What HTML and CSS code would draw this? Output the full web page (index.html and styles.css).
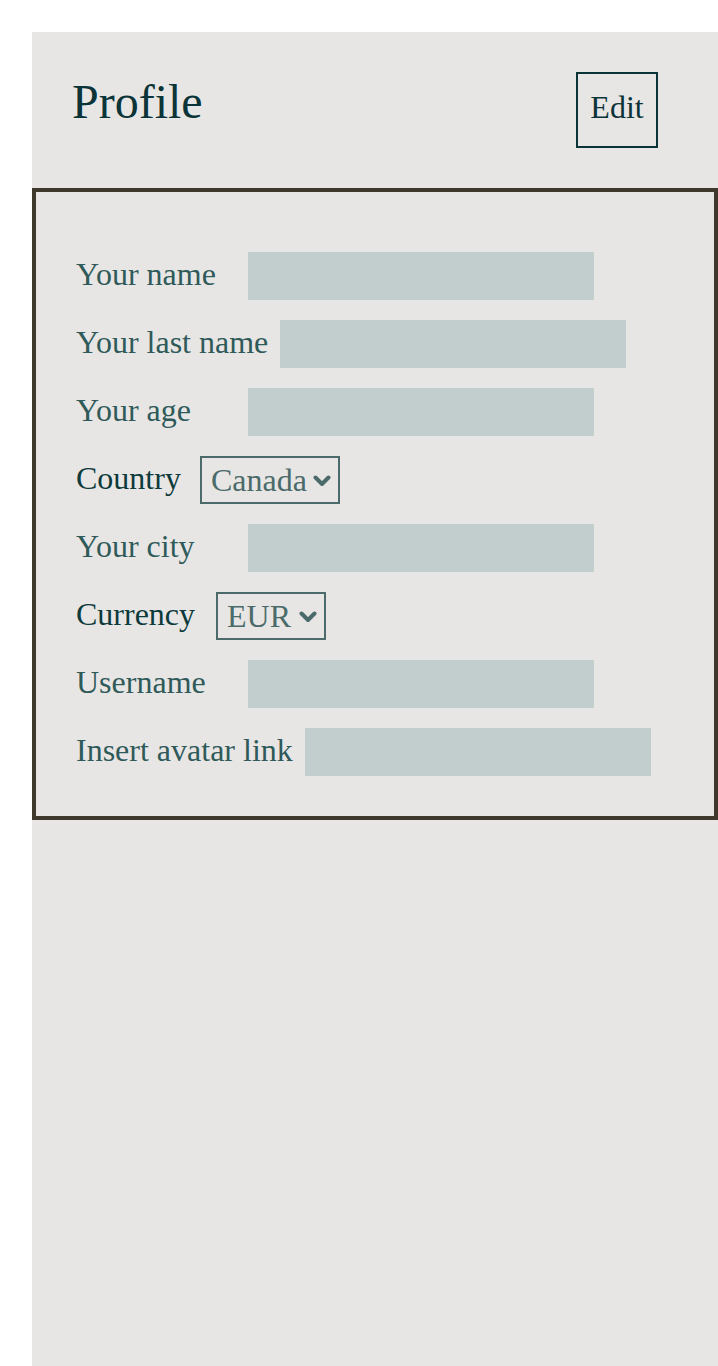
FILE: index.html
```html
<!DOCTYPE html>
<html lang="en">
<head>
<meta charset="utf-8">
<title>Profile</title>
<link rel="stylesheet" href="styles.css">
</head>
<body>
<main class="panel">
  <header class="panel-header">
    <h1 class="title">Profile</h1>
    <button class="edit-btn" type="button">Edit</button>
  </header>
  <form class="profile-form">
    <div class="row">
      <label class="label">Your name</label>
      <input class="field" type="text">
    </div>
    <div class="row">
      <label class="label">Your last name</label>
      <input class="field" type="text">
    </div>
    <div class="row">
      <label class="label">Your age</label>
      <input class="field" type="text">
    </div>
    <div class="row row-country">
      <label class="label-dark">Country</label>
      <span class="select" role="combobox">
        <span class="select-value">Canada</span>
        <svg class="chevron" viewBox="0 0 18 12" width="18" height="12"><polyline points="2.5,2.5 9,9 15.5,2.5" fill="none" stroke="currentColor" stroke-width="4" stroke-linecap="round" stroke-linejoin="round"/></svg>
      </span>
    </div>
    <div class="row">
      <label class="label">Your city</label>
      <input class="field" type="text">
    </div>
    <div class="row row-currency">
      <label class="label-dark">Currency</label>
      <span class="select select-wide-gap" role="combobox">
        <span class="select-value">EUR</span>
        <svg class="chevron" viewBox="0 0 18 12" width="18" height="12"><polyline points="2.5,2.5 9,9 15.5,2.5" fill="none" stroke="currentColor" stroke-width="4" stroke-linecap="round" stroke-linejoin="round"/></svg>
      </span>
    </div>
    <div class="row">
      <label class="label">Username</label>
      <input class="field" type="text">
    </div>
    <div class="row">
      <label class="label">Insert avatar link</label>
      <input class="field" type="text">
    </div>
  </form>
</main>
</body>
</html>
```
FILE: styles.css
```css
html, body {
  margin: 0;
  padding: 0;
  background: #ffffff;
  overflow: hidden;
}
body {
  font-family: "Liberation Serif", "Times New Roman", serif;
}
.panel {
  margin: 32px 0 0 32px;
  width: 686px;
  min-height: 1400px;
  background: #e8e6e4;
  box-sizing: border-box;
}
.panel-header {
  display: flex;
  justify-content: space-between;
  align-items: flex-start;
  padding: 40px 60px 40px 40px;
}
.title {
  margin: 0;
  padding-top: 2px;
  font-size: 48px;
  font-weight: normal;
  line-height: 1.149;
  color: #0b3438;
}
.edit-btn {
  width: 82px;
  height: 76px;
  margin: 0;
  padding: 0 0 6px 0;
  border: 2px solid #0b3438;
  background: transparent;
  font-family: "Liberation Serif", "Times New Roman", serif;
  font-size: 32px;
  color: #0b3438;
}
.profile-form {
  border: 4px solid #3e382d;
  padding: 60px 40px 40px 40px;
  display: flex;
  flex-direction: column;
  gap: 20px;
}
.row {
  display: flex;
  align-items: center;
  gap: 12px;
  height: 48px;
}
.row-country {
  gap: 19px;
}
.row-currency {
  gap: 21px;
}
.label {
  min-width: 160px;
  padding-bottom: 3px;
  font-size: 32px;
  color: #2f5a5a;
}
.label-dark {
  padding-bottom: 3px;
  font-size: 32px;
  color: #0d3a3b;
}
.field {
  width: 346px;
  height: 48px;
  box-sizing: border-box;
  border: none;
  margin: 0;
  padding: 0 10px;
  background: #c2cdcd;
  font-family: inherit;
  font-size: 32px;
  color: #2f5a5a;
}
.select {
  display: flex;
  align-items: center;
  gap: 6px;
  height: 48px;
  box-sizing: border-box;
  border: 2px solid #4b6b6b;
  padding: 0 7px 0 9px;
  color: #4b6b6b;
}
.select-wide-gap {
  gap: 8px;
}
.select-value {
  font-size: 32px;
  line-height: 1.149;
  color: #4b6b6b;
}
.chevron {
  display: block;
  margin-top: 1px;
}
```
